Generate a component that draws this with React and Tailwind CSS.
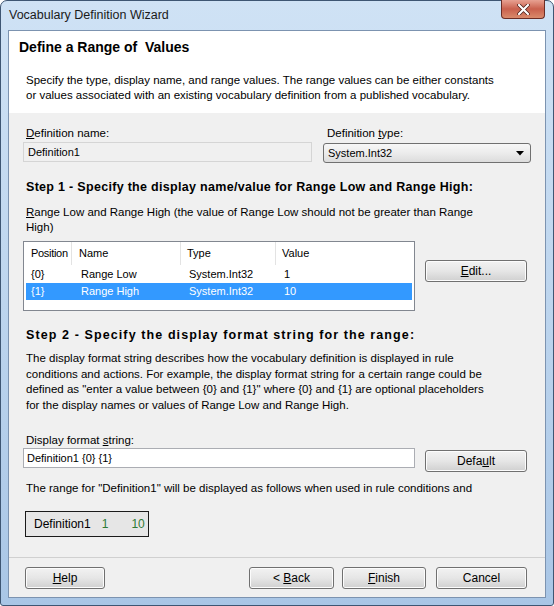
const FONT = "font-['Liberation_Sans',Arial,sans-serif]"

function Btn({ children, className = '' }) {
  return (
    <button
      className={`h-[22px] rounded-[3px] border border-[#707070] bg-gradient-to-b from-[#f2f2f2] via-[#e6e6e6] to-[#d0d0d0] text-[12px] text-black shadow-[inset_0_0_0_1px_#fcfcfc] ${className}`}
    >
      {children}
    </button>
  )
}

const rows = [
  { pos: '{0}', name: 'Range Low', type: 'System.Int32', value: '1' },
  { pos: '{1}', name: 'Range High', type: 'System.Int32', value: '10', selected: true },
]

function RangeTable() {
  return (
    <div className="h-[70px] w-[392px] border border-[#828790] bg-white text-[11px]">
      <div className="flex h-[23px] items-center">
        <div className="flex h-full w-[48px] items-center border-r border-[#e3e3e3] pl-[7px] tracking-[-0.3px]">Position</div>
        <div className="flex h-full w-[109px] items-center border-r border-[#e3e3e3] pl-[7px]">Name</div>
        <div className="flex h-full w-[95px] items-center border-r border-[#e3e3e3] pl-[6px]">Type</div>
        <div className="flex h-full flex-1 items-center pl-[6px]">Value</div>
      </div>
      <div className="mt-[1px] px-[2px]">
        {rows.map(r => (
          <div
            key={r.pos}
            className={`flex h-[17px] items-center ${r.selected ? 'bg-[#3399ff] text-white' : ''}`}
          >
            <div className="w-[48px] pl-[5px]">{r.pos}</div>
            <div className="w-[109px] pl-[7px]">{r.name}</div>
            <div className="w-[95px] pl-[6px]">{r.type}</div>
            <div className="pl-[6px]">{r.value}</div>
          </div>
        ))}
      </div>
    </div>
  )
}

export default function App() {
  return (
    <div className={`h-[606px] w-[554px] ${FONT} text-[11.5px] text-black`}>
      <div className="flex h-full flex-col rounded-t-[7px] rounded-b-[3px] border border-[#3e5673] bg-gradient-to-b from-[#cfe2f5] via-[#bdd5ee] to-[#a9c6e6] px-[7px] pb-[7px]">
        {/* title bar */}
        <div className="relative flex h-[29px] shrink-0 items-center pl-[1px]">
          <span className="text-[12.5px] text-[#1a1a1a]">Vocabulary Definition Wizard</span>
          <div className="absolute right-[1px] top-[-1px] flex h-[19px] w-[44px] items-center justify-center rounded-b-[4px] border border-t-0 border-[#6b2d25] bg-gradient-to-b from-[#e7a192] via-[#c9604d] to-[#d98a6c]">
            <svg width="13" height="11" viewBox="0 0 13 11">
              <path d="M2 1 L11 10 M11 1 L2 10" stroke="#4a1d17" strokeWidth="3.6" strokeLinecap="round" />
              <path d="M2 1 L11 10 M11 1 L2 10" stroke="#ffffff" strokeWidth="2.2" strokeLinecap="round" />
            </svg>
          </div>
        </div>

        {/* client area */}
        <div className="flex flex-1 flex-col border border-[#7c93b0] bg-[#f0f0f0]">
          <div className="h-[82px] shrink-0 bg-white pl-[10px] pt-[7px]">
            <div className="text-[14px] font-bold leading-[18px]">Define a Range of&nbsp; Values</div>
            <p className="ml-[7px] mt-[17px] w-[472px] leading-[15px]">
              Specify the type, display name, and range values. The range values can be either constants or values
              associated with an existing vocabulary definition from a published vocabulary.
            </p>
          </div>

          <div className="flex-1 px-[14px]">
            <div className="mt-[13px] flex gap-[11px]">
              <div className="w-[289px]">
                <div className="h-[14px] pl-[3px] leading-[14px]">
                  <u>D</u>efinition name:
                </div>
                <div className="mt-[2px] flex h-[20px] items-center border border-[#d5d5d5] bg-[#f0f0f0] pl-[4px] text-[11px]">
                  Definition1
                </div>
              </div>
              <div className="w-[208px]">
                <div className="h-[14px] pl-[4px] leading-[14px]">
                  Definition <u>t</u>ype:
                </div>
                <div className="mt-[3px] flex h-[20px] items-center justify-between rounded-[3px] border border-[#707070] bg-gradient-to-b from-[#f7f7f7] via-[#ececec] to-[#dcdcdc] pl-[4px] pr-[6px] text-[11px]">
                  <span>System.Int32</span>
                  <svg width="8" height="5" viewBox="0 0 8 5">
                    <path d="M0 0 H8 L4 4.5 Z" fill="#000" />
                  </svg>
                </div>
              </div>
            </div>

            <div className="mt-[16px] pl-[3px] text-[12.5px] font-bold leading-[16px] tracking-[0.3px]">
              Step 1 - Specify the display name/value for Range Low and Range High:
            </div>
            <p className="mt-[10px] w-[468px] pl-[3px] leading-[15px]">
              <u>R</u>ange Low and Range High (the value of Range Low should not be greater than Range High)
            </p>

            <div className="mt-[6px] flex items-start gap-[10px]">
              <RangeTable />
              <Btn className="mt-[19px] w-[102px]">
                <u>E</u>dit...
              </Btn>
            </div>

            <div className="mt-[16px] pl-[3px] text-[12.5px] font-bold leading-[16px] tracking-[1.1px]">
              Step 2 - Specify the display format string for the range:
            </div>
            <p className="mt-[8px] w-[470px] pl-[3px] leading-[15.5px]">
              The display format string describes how the vocabulary definition is displayed in rule conditions and
              actions. For example, the display format string for a certain range could be defined as "enter a value
              between {'{0}'} and {'{1}'}" where {'{0}'} and {'{1}'} are optional placeholders for the display names or
              values of Range Low and Range High.
            </p>

            <div className="mt-[20px] h-[14px] pl-[3px] leading-[14px]">
              Display format <u>s</u>tring:
            </div>
            <div className="mt-[1px] flex items-start gap-[10px]">
              <div className="flex h-[20px] w-[392px] items-center border border-[#abadb3] bg-white pl-[3px] text-[11px]">
                Definition1 {'{0}'} {'{1}'}
              </div>
              <Btn className="mt-[2px] w-[102px]">
                Defa<u>u</u>lt
              </Btn>
            </div>

            <p className="mt-[9px] h-[14px] overflow-hidden whitespace-nowrap pl-[3px] leading-[14px]">
              The range for "Definition1" will be displayed as follows when used in rule conditions and
            </p>

            <div className="ml-[2px] mt-[16px] flex h-[26px] w-[124px] items-center gap-[11px] border border-[#1a1a1a] bg-[#e6e6e6] pl-[8px] text-[12px]">
              <span>Definition1</span>
              <span className="text-[#2f7a34]">1</span>
              <span className="ml-[12px] text-[#2f7a34]">10</span>
            </div>
          </div>

          {/* footer */}
          <div className="flex h-[40px] shrink-0 items-start border-t border-[#d0d0d0] pl-[16px] pr-[18px] pt-[9px]">
            <Btn className="w-[80px]">
              <u>H</u>elp
            </Btn>
            <Btn className="ml-auto w-[85px]">
              &lt; <u>B</u>ack
            </Btn>
            <Btn className="ml-[8px] w-[84px]">
              <u>F</u>inish
            </Btn>
            <Btn className="ml-[10px] w-[91px]">Cancel</Btn>
          </div>
        </div>
      </div>
    </div>
  )
}
